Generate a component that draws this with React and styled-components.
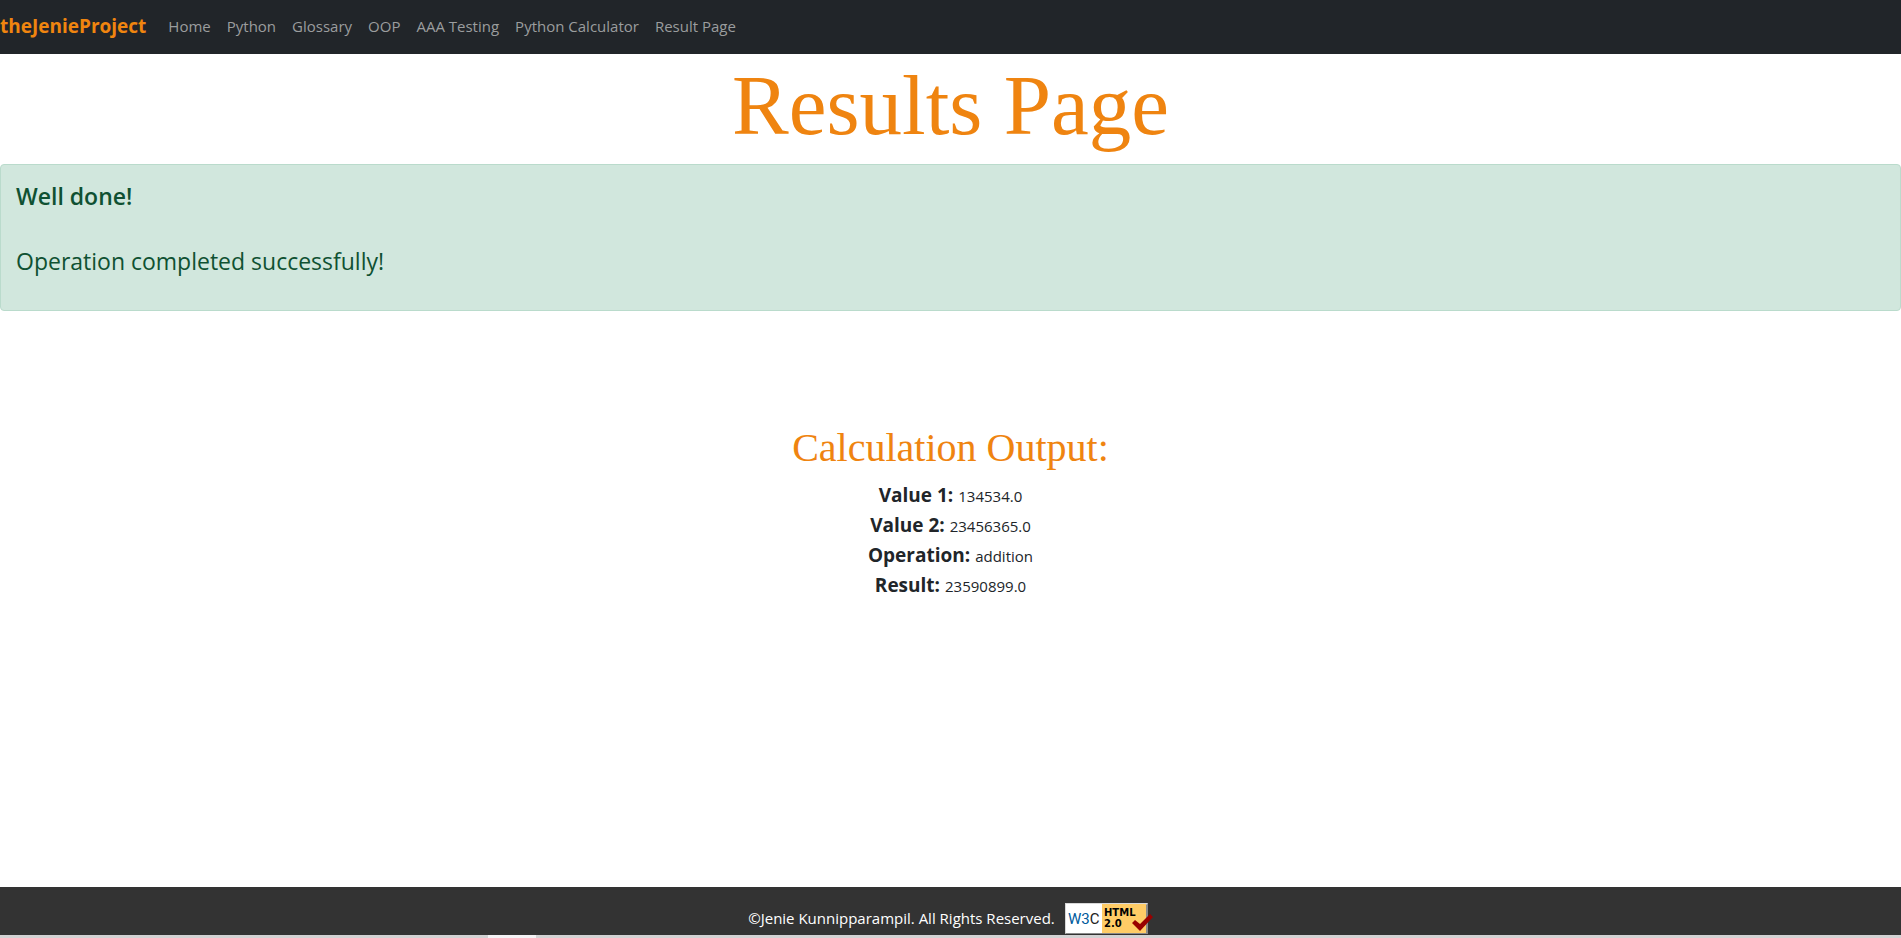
import React from "react";
import styled, { createGlobalStyle } from "styled-components";

const GlobalStyle = createGlobalStyle`
  *, *::before, *::after { box-sizing: border-box; }
  body {
    margin: 0;
    background: #fff;
    color: #212529;
    font-family: "Open Sans", "Noto Sans", sans-serif;
    font-size: 15px;
    line-height: 24px;
  }
`;

const Page = styled.div`
  display: flex;
  flex-direction: column;
  min-height: 100vh;
`;

const Navbar = styled.nav`
  display: flex;
  align-items: center;
  gap: 14px;
  padding: 6px 0 8px;
  height: 54px;
  background: #212529;
`;

const Brand = styled.a`
  color: #f0850f;
  font-size: 19px;
  font-weight: 700;
  text-decoration: none;
`;

const NavList = styled.ul`
  display: flex;
  margin: 0;
  padding: 0;
  list-style: none;
`;

const NavLink = styled.a`
  display: block;
  padding: 8px;
  color: #9b9d9e;
  text-decoration: none;
`;

const Main = styled.main`
  flex: 1;
`;

const Heading = styled.h1`
  margin: 0;
  padding-bottom: 8px;
  color: #ef8410;
  font-family: "Liberation Serif", serif;
  font-size: 85px;
  font-weight: 400;
  line-height: 102px;
  text-align: center;
`;

const Alert = styled.section`
  padding: 16px 15px;
  border: 1px solid #badbcc;
  border-radius: 4px;
  background: #d1e7dd;
  color: #0f5132;
`;

const AlertTitle = styled.h2`
  margin: 0 0 32px;
  font-size: 23px;
  font-weight: 600;
  line-height: 30px;
`;

const AlertText = styled.p`
  margin: 0 0 15px;
  font-size: 23px;
  font-weight: 400;
  line-height: 36px;
`;

const Output = styled.section`
  padding-top: 113px;
  text-align: center;
`;

const OutputTitle = styled.h2`
  margin: 0 0 8px;
  color: #ef8410;
  font-family: "Liberation Serif", serif;
  font-size: 40px;
  font-weight: 400;
  line-height: 48px;
`;

const Results = styled.dl`
  margin: 0;
`;

const ResultRow = styled.div`
  display: flex;
  justify-content: center;
  align-items: baseline;
  gap: 5px;
  height: 30px;
  line-height: 30px;
`;

const Label = styled.dt`
  font-size: 19px;
  font-weight: 700;
`;

const Value = styled.dd`
  margin: 0;
  font-weight: 400;
`;

const Footer = styled.footer`
  display: flex;
  justify-content: center;
  gap: 10px;
  padding-top: 16px;
  height: 48px;
  background: #333;
  color: #fff;
`;

const Copyright = styled.p`
  margin: 0;
  line-height: 30px;
`;

const BadgeLink = styled.a`
  display: block;
  height: 31px;
`;

const Taskbar = styled.div`
  display: flex;
  height: 3px;
  background: #d3d2d3;
`;

const TaskbarActive = styled.span`
  width: 48px;
  margin-left: 488px;
  background: #f4f2f4;
`;

const links = ["Home", "Python", "Glossary", "OOP", "AAA Testing", "Python Calculator", "Result Page"];

const results = [
  ["Value 1:", "134534.0"],
  ["Value 2:", "23456365.0"],
  ["Operation:", "addition"],
  ["Result:", "23590899.0"],
];

function HtmlBadge() {
  return (
    <svg width="88" height="31" viewBox="0 0 88 31" role="img" aria-label="W3C HTML 2.0">
      <rect width="83" height="31" fill="#8a8a8a" />
      <path d="M0 31V0H83L81 2H2V29Z" fill="#d8d8d8" />
      <rect x="1" y="1" width="36" height="29" fill="#fff" />
      <rect x="37" y="1" width="44" height="29" fill="#fc6" />
      <text x="3" y="21" fontFamily="Roboto, sans-serif" fontSize="15" fill="#005a9c">
        W3<tspan fill="#222">C</tspan>
      </text>
      <g fontFamily="DejaVu Sans, sans-serif" fontSize="10" fontWeight="700" fill="#000">
        <text x="39" y="13">HTML</text>
        <text x="39" y="24">2.0</text>
      </g>
      <path d="M67 20L70 17L75 21L85 11L88 14L75 28Z" fill="#900" />
    </svg>
  );
}

export default function App() {
  return (
    <>
      <GlobalStyle />
      <Page>
        <Navbar>
          <Brand href="#">theJenieProject</Brand>
          <NavList>
            {links.map((link) => (
              <li key={link}><NavLink href="#">{link}</NavLink></li>
            ))}
          </NavList>
        </Navbar>
        <Main>
          <Heading>Results Page</Heading>
          <Alert>
            <AlertTitle>Well done!</AlertTitle>
            <AlertText>Operation completed successfully!</AlertText>
          </Alert>
          <Output>
            <OutputTitle>Calculation Output:</OutputTitle>
            <Results>
              {results.map(([label, value]) => (
                <ResultRow key={label}>
                  <Label>{label}</Label>
                  <Value>{value}</Value>
                </ResultRow>
              ))}
            </Results>
          </Output>
        </Main>
        <Footer>
          <Copyright>©Jenie Kunnipparampil. All Rights Reserved.</Copyright>
          <BadgeLink href="#"><HtmlBadge /></BadgeLink>
        </Footer>
        <Taskbar><TaskbarActive /></Taskbar>
      </Page>
    </>
  );
}
